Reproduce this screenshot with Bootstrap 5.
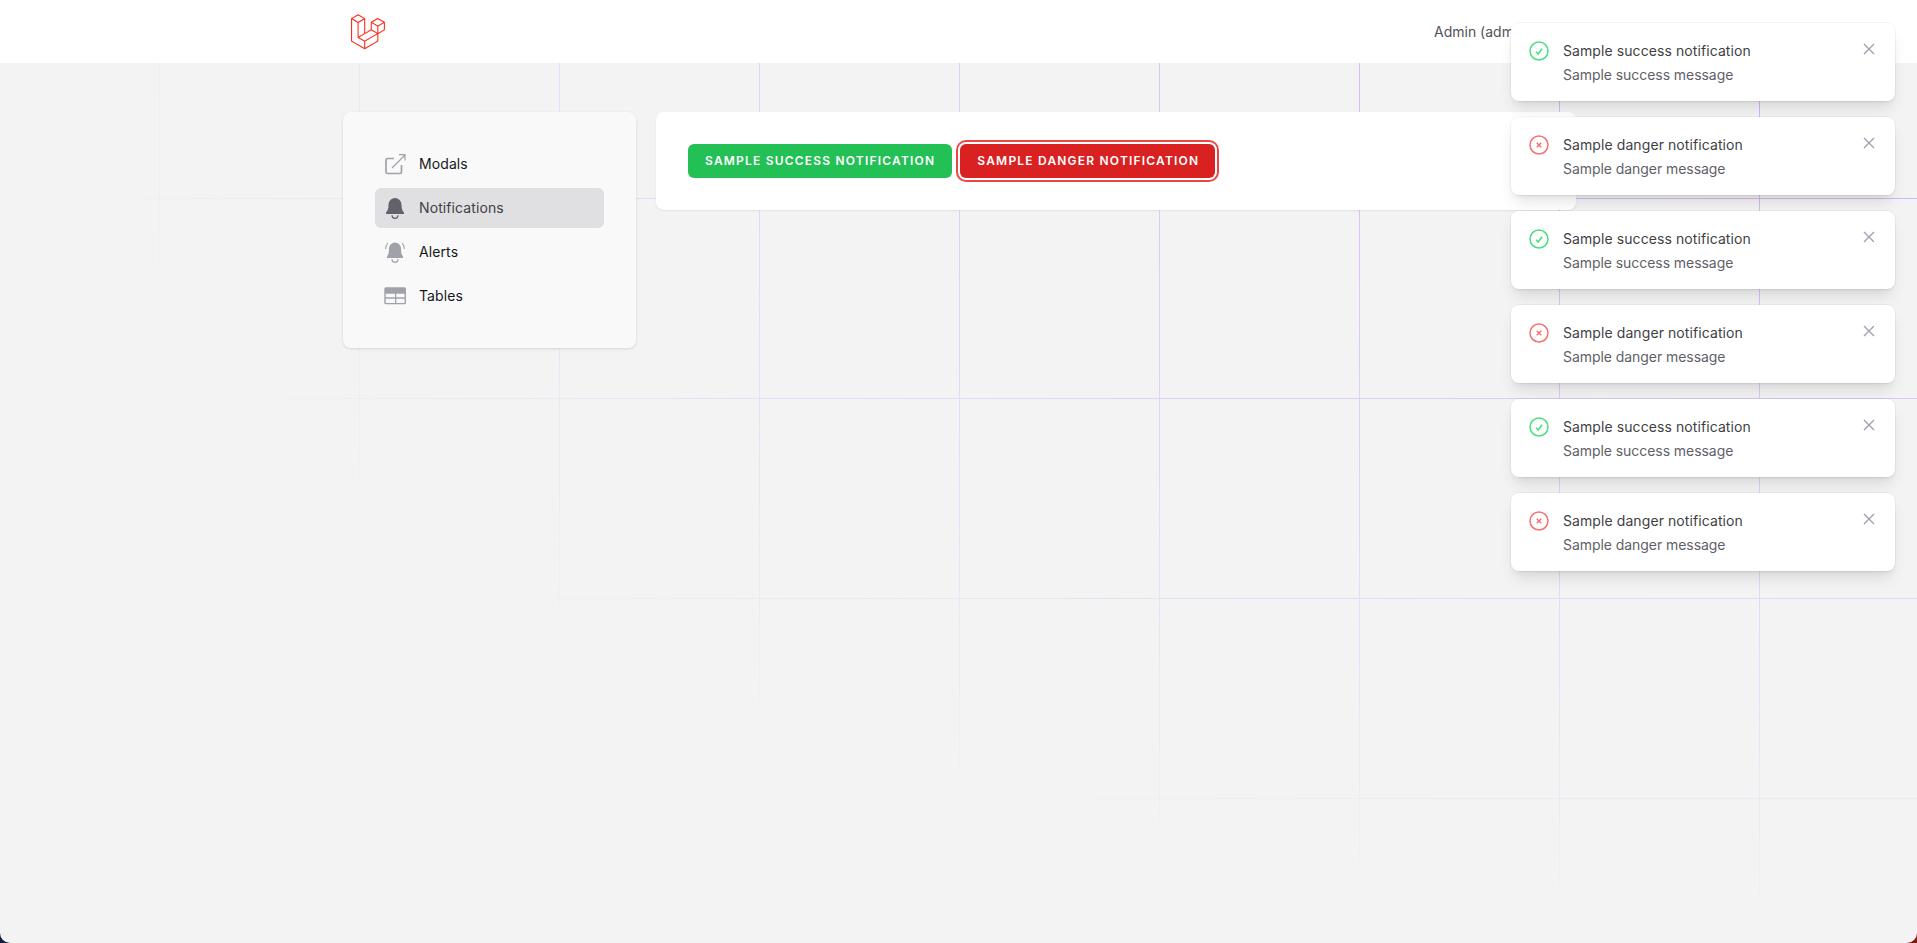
<!DOCTYPE html>
<html lang="en">

<head>
    <meta charset="UTF-8" />
    <meta name="viewport" content="width=device-width, initial-scale=1.0" />
    <title>Notifications</title>
    <link href="https://cdn.jsdelivr.net/npm/bootstrap@5.3.5/dist/css/bootstrap.min.css" rel="stylesheet" />
    <style>
        html {
            background: linear-gradient(to right, #10203a 50%, #7a1a10 50%);
        }

        body {
            font-family: Inter, "Liberation Sans", sans-serif;
            background: #f3f3f4;
            color: #18181b;
            font-size: 14px;
            height: 943px;
            overflow: hidden;
            position: relative;
            border-radius: 0 0 10px 10px;
        }

        .grid-lines {
            position: absolute;
            inset: 0;
            background-image:
                linear-gradient(to right, #cba6f9 1px, transparent 1px),
                linear-gradient(to bottom, #cba6f9 1px, transparent 1px);
            background-size: 200px 200px;
            background-position: 159px 198px;
            -webkit-mask-image: radial-gradient(ellipse at top right, #000, transparent 70%);
            mask-image: radial-gradient(ellipse at top right, #000, transparent 70%);
        }

        .top-bar {
            height: 63px;
            position: relative;
            z-index: 1;
            padding-left: 351px;
        }

        .top-user {
            margin-left: 1049px;
            color: #52525b;
            white-space: nowrap;
            font-size: 14px;
        }

        .main-wrap {
            position: relative;
            padding: 49px 0 0 343px;
            gap: 20px;
        }

        .side-panel {
            width: 293px;
            height: 236px;
            background: #f9f9f9;
            border-radius: 8px;
            box-shadow: 0 1px 3px rgba(0, 0, 0, .12);
            padding: 32px;
        }

        .side-link {
            height: 40px;
            margin-bottom: 4px;
            padding-left: 8px;
            gap: 12px;
            border-radius: 6px;
            color: #18181b;
            text-decoration: none;
            font-weight: 400;
            letter-spacing: .007em;
            font-size: 14px;
            line-height: 20px;
        }

        .side-link.is-current {
            background: #e0e0e2;
            color: #3f3f46;
        }

        .side-link svg {
            width: 24px;
            height: 24px;
            color: #a1a1aa;
            flex: none;
        }

        .side-link.is-current svg {
            color: #62626b;
        }

        .content-panel {
            width: 920px;
            height: 98px;
            background: #fff;
            border-radius: 8px;
            box-shadow: 0 1px 2px rgba(0, 0, 0, .08);
            padding: 32px;
            gap: 8px;
        }

        .act-btn {
            height: 34px;
            padding: 0 17px;
            border: 0;
            border-radius: 6px;
            color: #fff;
            font-size: 12px;
            font-weight: 600;
            letter-spacing: .1em;
            text-transform: uppercase;
            white-space: nowrap;
        }

        .act-success {
            background: #22c055;
        }

        .act-danger {
            background: #d92121;
            padding-right: 16px;
            box-shadow: 0 0 0 2px #fff, 0 0 0 4px #ef4444;
        }

        .toast-stack {
            position: absolute;
            top: 23px;
            right: 22px;
            width: 384px;
            z-index: 5;
            gap: 16px;
        }

        .note-card {
            height: 78px;
            background: #fff;
            border-radius: 8px;
            box-shadow: 0 10px 15px -3px rgba(0, 0, 0, .1), 0 4px 6px -4px rgba(0, 0, 0, .1), 0 0 0 1px rgba(0, 0, 0, .04);
            padding: 16px;
            gap: 12px;
            color: #3f3f46;
            font-size: 14px;
        }

        .note-title {
            font-weight: 400;
            letter-spacing: .006em;
            line-height: 20px;
            margin-top: 2px;
        }

        .note-text {
            color: #5f5f68;
            line-height: 20px;
            letter-spacing: -.004em;
            margin-top: 4px;
        }

        .note-ok {
            color: #4ade80;
        }

        .note-bad {
            color: #f87171;
        }

        .note-close {
            color: #9ca3af;
        }
    </style>
</head>

<body>
    <div class="grid-lines"></div>

    <header class="top-bar bg-white d-flex align-items-center">
        <!-- laravel mark -->
        <svg class="flex-shrink-0" width="34" height="36" viewBox="0 0 62 65" fill="#ff2d20">
            <path d="M61.8548 14.6253C61.8778 14.7102 61.8895 14.7978 61.8897 14.8858V28.5615C61.8898 28.737 61.8434 28.9095 61.7554 29.0614C61.6675 29.2132 61.5409 29.3392 61.3887 29.4265L49.9104 36.0351V49.1337C49.9104 49.4902 49.7209 49.8192 49.4118 49.9987L25.4519 63.7916C25.3971 63.8227 25.3372 63.8427 25.2774 63.8639C25.255 63.8714 25.2338 63.8851 25.2101 63.8913C25.0426 63.9354 24.8666 63.9354 24.6991 63.8913C24.6716 63.8838 24.6467 63.8689 24.6205 63.8589C24.5657 63.8389 24.5084 63.8215 24.456 63.7916L0.501061 49.9987C0.348882 49.9113 0.222437 49.7853 0.134469 49.6334C0.0465019 49.4816 0.000120578 49.3092 0 49.1337L0 8.10652C0 8.01678 0.0124642 7.92953 0.0348998 7.84477C0.0423783 7.8161 0.0598282 7.78993 0.0697995 7.76126C0.0884958 7.70891 0.105946 7.65531 0.133367 7.6067C0.152063 7.5743 0.179485 7.54812 0.20192 7.51821C0.230588 7.47832 0.256763 7.43719 0.290416 7.40229C0.319084 7.37362 0.356476 7.35243 0.388883 7.32751C0.425029 7.29759 0.457436 7.26518 0.498568 7.2415L12.4779 0.345059C12.6296 0.257786 12.8015 0.211853 12.9765 0.211853C13.1515 0.211853 13.3234 0.257786 13.475 0.345059L25.4531 7.2415H25.4556C25.4955 7.26643 25.5292 7.29759 25.5653 7.32626C25.5977 7.35119 25.6339 7.37362 25.6625 7.40104C25.6974 7.43719 25.7224 7.47832 25.7523 7.51821C25.7735 7.54812 25.8021 7.5743 25.8196 7.6067C25.8483 7.65656 25.8645 7.70891 25.8844 7.76126C25.8944 7.78993 25.9118 7.8161 25.9193 7.84602C25.9423 7.93096 25.954 8.01853 25.9542 8.10652V33.7317L35.9355 27.9844V14.8846C35.9355 14.7973 35.948 14.7088 35.9704 14.6253C35.9792 14.5954 35.9954 14.5692 36.0053 14.5405C36.0253 14.4882 36.0427 14.4346 36.0702 14.386C36.0888 14.3536 36.1163 14.3274 36.1375 14.2975C36.1674 14.2576 36.1923 14.2165 36.2272 14.1816C36.2559 14.1529 36.292 14.1317 36.3244 14.1068C36.3618 14.0769 36.3942 14.0445 36.4341 14.0208L48.4147 7.12434C48.5663 7.03694 48.7383 6.99094 48.9133 6.99094C49.0883 6.99094 49.2602 7.03694 49.4118 7.12434L61.3899 14.0208C61.4323 14.0457 61.4647 14.0769 61.5021 14.1055C61.5333 14.1305 61.5694 14.1529 61.5981 14.1803C61.633 14.2165 61.6579 14.2576 61.6878 14.2975C61.7103 14.3274 61.7377 14.3536 61.7551 14.386C61.7838 14.4346 61.8 14.4882 61.8199 14.5405C61.8312 14.5692 61.8474 14.5954 61.8548 14.6253ZM59.893 27.9844V16.6121L55.7013 19.0252L49.9104 22.3593V33.7317L59.8942 27.9844H59.893ZM47.9149 48.5566V37.1768L42.2187 40.4299L25.953 49.7133V61.2003L47.9149 48.5566ZM1.99677 9.83281V48.5566L23.9562 61.199V49.7145L12.4841 43.2219L12.4804 43.2194L12.4754 43.2169C12.4368 43.1945 12.4044 43.1621 12.3682 43.1347C12.3371 43.1097 12.3009 43.0898 12.2735 43.0624L12.271 43.0586C12.2386 43.0275 12.2162 42.9888 12.1887 42.9539C12.1638 42.9203 12.1339 42.8916 12.114 42.8567L12.1127 42.853C12.0903 42.8156 12.0766 42.7707 12.0604 42.7283C12.0442 42.6909 12.023 42.656 12.013 42.6161C12.0005 42.5688 11.998 42.5177 11.9931 42.4691C11.9881 42.4317 11.9781 42.3943 11.9781 42.3569V15.5801L6.18848 12.2446L1.99677 9.83281ZM12.9777 2.36177L2.99764 8.10652L12.9752 13.8513L22.9541 8.10527L12.9752 2.36177H12.9777ZM18.1678 38.2138L23.9574 34.8809V9.83281L19.7657 12.2459L13.9749 15.5801V40.6281L18.1678 38.2138ZM48.9133 9.14105L38.9344 14.8858L48.9133 20.6305L58.8909 14.8846L48.9133 9.14105ZM47.9149 22.3593L42.124 19.0252L37.9323 16.6121V27.9844L43.7219 31.3174L47.9149 33.7317V22.3593ZM24.9533 47.987L39.59 39.631L46.9065 35.4555L36.9352 29.7145L25.4544 36.3242L14.9907 42.3482L24.9533 47.987Z" />
        </svg>
        <span class="top-user">Admin (admin@example.com)</span>
    </header>

    <main class="main-wrap d-flex align-items-start">
        <nav class="side-panel flex-shrink-0">
            <a class="side-link d-flex align-items-center" href="#">
                <svg viewBox="0 0 24 24" fill="none" stroke="currentColor">
                    <path stroke-width="1.700" d="M11 6.500H4.500A1.500 1.500 0 0 0 3 8v12a1.500 1.500 0 0 0 1.500 1.500H17a1.500 1.500 0 0 0 1.500-1.500v-7" />
                    <path stroke-width="1.200" d="M9 16 22 3M16 2.600h6v6" />
                </svg>
                Modals
            </a>
            <a class="side-link is-current d-flex align-items-center" href="#">
                <svg viewBox="0 0 24 24" fill="currentColor">
                    <path d="M12 2a6.500 6.500 0 0 0-6.500 6.500c0 4.500-1 6.300-2.500 8v1.500h18v-1.500c-1.500-1.700-2.500-3.500-2.500-8A6.500 6.500 0 0 0 12 2z" />
                    <path d="M9 19.300a3 3 0 0 0 6 0" fill="none" stroke="currentColor" stroke-width="1.200" />
                </svg>
                Notifications
            </a>
            <a class="side-link d-flex align-items-center" href="#">
                <svg viewBox="0 0 24 24" fill="currentColor">
                    <path d="M12 2.500a6 6 0 0 0-6 6c0 4.500-.8 6.200-2 8v1.500h16v-1.500c-1.200-1.800-2-3.500-2-8a6 6 0 0 0-6-6z" />
                    <path d="M9 19.300a3 3 0 0 0 6 0" fill="none" stroke="currentColor" stroke-width="1.200" />
                    <path d="M2.700 9c.1-2.500.8-4.500 2.100-6M21.300 9c-.1-2.500-.8-4.500-2.100-6" fill="none" stroke="currentColor" stroke-width="1.100" />
                </svg>
                Alerts
            </a>
            <a class="side-link d-flex align-items-center" href="#">
                <svg viewBox="0 0 24 24" fill="currentColor">
                    <path fill-rule="evenodd" d="M2.800 3.300h18.700A1.500 1.500 0 0 1 23 4.800v14A1.500 1.500 0 0 1 21.500 20.300H2.800a1.500 1.500 0 0 1-1.500-1.500v-14a1.500 1.500 0 0 1 1.500-1.500zM2.700 9.800v3.500h9.300V9.800zm10.600 0v3.500h8.300V9.800zM2.700 14.700v3.800c0 .3.200.5.500.5H12v-4.300zm10.600 0V19h8c.200 0 .3-.2.300-.5v-3.800z" />
                </svg>
                Tables
            </a>
        </nav>

        <section class="content-panel d-flex align-items-start">
            <button type="button" class="act-btn act-success">Sample success notification</button>
            <button type="button" class="act-btn act-danger">Sample danger notification</button>
        </section>
    </main>

    <aside class="toast-stack d-flex flex-column">
        <div class="note-card d-flex">
            <svg class="note-ok flex-shrink-0" width="24" height="24" viewBox="0 0 24 24" fill="none" stroke="currentColor" stroke-width="1.500"><path d="M9 12.750 11.250 15 15 9.750M21 12a9 9 0 1 1-18 0 9 9 0 0 1 18 0Z" /></svg>
            <div class="flex-grow-1"><div class="note-title">Sample success notification</div><div class="note-text">Sample success message</div></div>
            <svg class="note-close flex-shrink-0" width="20" height="20" viewBox="0 0 20 20" fill="none" stroke="currentColor" stroke-width="1.400"><path d="m5 5 10 10M15 5 5 15" /></svg>
        </div>
        <div class="note-card d-flex">
            <svg class="note-bad flex-shrink-0" width="24" height="24" viewBox="0 0 24 24" fill="none" stroke="currentColor" stroke-width="1.500"><path d="m9.750 9.750 4.500 4.500m0-4.500-4.500 4.500M21 12a9 9 0 1 1-18 0 9 9 0 0 1 18 0Z" /></svg>
            <div class="flex-grow-1"><div class="note-title">Sample danger notification</div><div class="note-text">Sample danger message</div></div>
            <svg class="note-close flex-shrink-0" width="20" height="20" viewBox="0 0 20 20" fill="none" stroke="currentColor" stroke-width="1.400"><path d="m5 5 10 10M15 5 5 15" /></svg>
        </div>
        <div class="note-card d-flex">
            <svg class="note-ok flex-shrink-0" width="24" height="24" viewBox="0 0 24 24" fill="none" stroke="currentColor" stroke-width="1.500"><path d="M9 12.750 11.250 15 15 9.750M21 12a9 9 0 1 1-18 0 9 9 0 0 1 18 0Z" /></svg>
            <div class="flex-grow-1"><div class="note-title">Sample success notification</div><div class="note-text">Sample success message</div></div>
            <svg class="note-close flex-shrink-0" width="20" height="20" viewBox="0 0 20 20" fill="none" stroke="currentColor" stroke-width="1.400"><path d="m5 5 10 10M15 5 5 15" /></svg>
        </div>
        <div class="note-card d-flex">
            <svg class="note-bad flex-shrink-0" width="24" height="24" viewBox="0 0 24 24" fill="none" stroke="currentColor" stroke-width="1.500"><path d="m9.750 9.750 4.500 4.500m0-4.500-4.500 4.500M21 12a9 9 0 1 1-18 0 9 9 0 0 1 18 0Z" /></svg>
            <div class="flex-grow-1"><div class="note-title">Sample danger notification</div><div class="note-text">Sample danger message</div></div>
            <svg class="note-close flex-shrink-0" width="20" height="20" viewBox="0 0 20 20" fill="none" stroke="currentColor" stroke-width="1.400"><path d="m5 5 10 10M15 5 5 15" /></svg>
        </div>
        <div class="note-card d-flex">
            <svg class="note-ok flex-shrink-0" width="24" height="24" viewBox="0 0 24 24" fill="none" stroke="currentColor" stroke-width="1.500"><path d="M9 12.750 11.250 15 15 9.750M21 12a9 9 0 1 1-18 0 9 9 0 0 1 18 0Z" /></svg>
            <div class="flex-grow-1"><div class="note-title">Sample success notification</div><div class="note-text">Sample success message</div></div>
            <svg class="note-close flex-shrink-0" width="20" height="20" viewBox="0 0 20 20" fill="none" stroke="currentColor" stroke-width="1.400"><path d="m5 5 10 10M15 5 5 15" /></svg>
        </div>
        <div class="note-card d-flex">
            <svg class="note-bad flex-shrink-0" width="24" height="24" viewBox="0 0 24 24" fill="none" stroke="currentColor" stroke-width="1.500"><path d="m9.750 9.750 4.500 4.500m0-4.500-4.500 4.500M21 12a9 9 0 1 1-18 0 9 9 0 0 1 18 0Z" /></svg>
            <div class="flex-grow-1"><div class="note-title">Sample danger notification</div><div class="note-text">Sample danger message</div></div>
            <svg class="note-close flex-shrink-0" width="20" height="20" viewBox="0 0 20 20" fill="none" stroke="currentColor" stroke-width="1.400"><path d="m5 5 10 10M15 5 5 15" /></svg>
        </div>
    </aside>

    <script src="https://cdn.jsdelivr.net/npm/bootstrap@5.3.5/dist/js/bootstrap.bundle.min.js"></script>
</body>

</html>
